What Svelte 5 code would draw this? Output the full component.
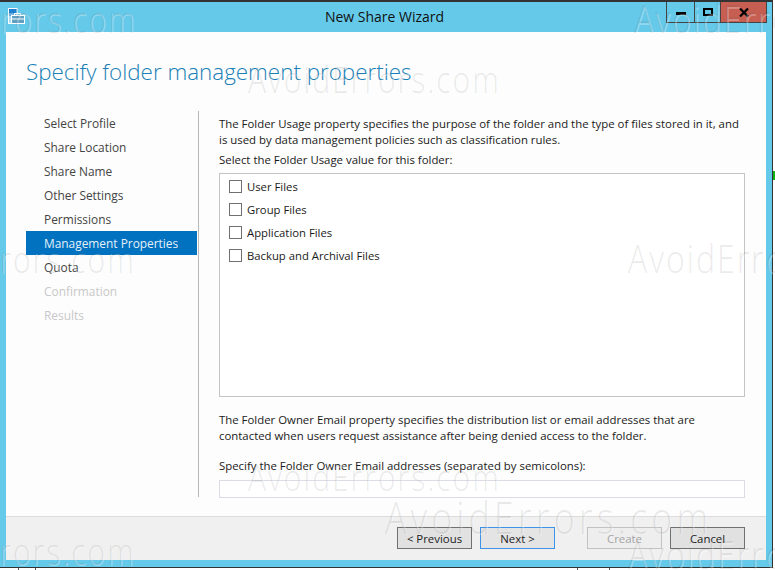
<script>
  const steps = [
    { label: 'Select Profile' },
    { label: 'Share Location' },
    { label: 'Share Name' },
    { label: 'Other Settings' },
    { label: 'Permissions' },
    { label: 'Management Properties', active: true },
    { label: 'Quota' },
    { label: 'Confirmation', off: true },
    { label: 'Results', off: true }
  ];
  const usages = ['User Files', 'Group Files', 'Application Files', 'Backup and Archival Files'];
  // faint site watermarks laid over the screenshot
  const marks = [
    { x: 248, y: 62, size: 30, gap: 2 },
    { x: 634, y: 0, size: 32, gap: 2 },
    { x: -116, y: 2, size: 30, gap: 2 },
    { x: 628, y: 240, size: 32, gap: 2 },
    { x: -117, y: 242, size: 30, gap: 2 },
    { x: 248, y: 460, size: 30, gap: 2 },
    { x: 385, y: 496, size: 36, gap: 4 },
    { x: -117, y: 534, size: 30, gap: 2 },
    { x: 628, y: 536, size: 32, gap: 2 }
  ];
</script>

<div class="screen">
  <div class="window">
    <header class="titlebar">
      <svg class="appicon" width="17" height="16" viewBox="0 0 17 16">
        <rect x="0.5" y="0.5" width="8.5" height="15" fill="#a9dcf0" stroke="#fff" />
        <rect x="1" y="1" width="7.5" height="4.5" fill="#1f7fd0" />
        <rect x="1" y="6.5" width="7.5" height="1.5" fill="#1f7fd0" />
        <path d="M6.5 7.5V5.5h6v2" fill="none" stroke="#fff" />
        <rect x="3.5" y="7.5" width="13" height="8" fill="#5f9fc2" stroke="#fff" />
        <path d="M3.5 11h13" stroke="#fff" />
      </svg>
      <div class="title">New Share Wizard</div>
      <div class="winbtns">
        <div class="winbtn min"><span></span></div>
        <div class="winbtn max"><span></span></div>
        <div class="winbtn close">
          <svg width="10" height="9" viewBox="0 0 10 9"><path d="M1 0.5l8 8M9 0.5l-8 8" stroke="#000" stroke-width="2.2" fill="none" /></svg>
        </div>
      </div>
    </header>

    <div class="client">
      <h1>Specify folder management properties</h1>

      <div class="body">
        <nav class="steps">
          {#each steps as step}
            <div class="step" class:active={step.active} class:off={step.off}>{step.label}</div>
          {/each}
        </nav>

        <section class="content">
          <p class="intro">The Folder Usage property specifies the purpose of the folder and the type of files stored in it, and<br />is used by data management policies such as classification rules.</p>
          <p class="sel">Select the Folder Usage value for this folder:</p>
          <div class="listbox">
            {#each usages as usage}
              <div class="check"><span class="box"></span>{usage}</div>
            {/each}
          </div>
          <p class="owner">The Folder Owner Email property specifies the distribution list or email addresses that are<br />contacted when users request assistance after being denied access to the folder.</p>
          <p class="spec">Specify the Folder Owner Email addresses (separated by semicolons):</p>
          <div class="input"></div>
        </section>
      </div>

      <footer>
        <button>&lt; Previous</button>
        <button class="primary">Next &gt;</button>
        <button class="disabled gap">Create</button>
        <button>Cancel</button>
      </footer>
    </div>
  </div>

  <div class="strip">
    <i style="left: 18px"></i>
    <i style="left: 35px"></i>
    <i style="left: 577px"></i>
    <i style="left: 609px"></i>
  </div>
  <div class="green"></div>

  {#each marks as m}
    <div class="mark" style="left: {m.x}px; top: {m.y}px; font-size: {m.size}px; letter-spacing: {m.gap}px">AvoidErrors.com</div>
  {/each}
</div>

<style>
  :global(body) {
    margin: 0;
    background: #fff;
  }

  .screen {
    position: relative;
    width: 775px;
    height: 570px;
    overflow: hidden;
    font-family: "Open Sans", "Noto Sans", sans-serif;
    font-size: 11.4px;
    color: #1a1a1a;
  }

  .window {
    box-sizing: border-box;
    width: 773px;
    height: 568px;
    background: #65c9ea;
    border-top: 2px solid #333;
    border-right: 1px solid #333;
    border-bottom: 1px solid #333;
    padding: 0 6px 7px 6px;
    display: flex;
    flex-direction: column;
  }

  .titlebar {
    position: relative;
    height: 30px;
    flex: none;
    display: flex;
    justify-content: center;
  }

  .appicon {
    position: absolute;
    left: 2px;
    top: 6px;
  }

  .title {
    font-size: 14px;
    color: #111;
    margin-top: 5px;
    margin-right: 3px;
  }

  .winbtns {
    position: absolute;
    right: -1px;
    top: 0;
    display: flex;
  }

  .winbtn {
    box-sizing: border-box;
    height: 21px;
    border: 1px solid #444;
    border-top: 0;
    display: flex;
    align-items: center;
    justify-content: center;
  }

  .min { width: 29px; }
  .min span { width: 10px; height: 3px; background: #000; margin-top: 2px; }
  .max { width: 26px; border-left: 0; }
  .max span { box-sizing: border-box; width: 10px; height: 8px; border: 2px solid #000; }
  .close { width: 46px; border-left: 0; background: #c75e52; }

  .client {
    flex: 1;
    min-height: 0;
    background: #fdfdfd;
    display: flex;
    flex-direction: column;
  }

  h1 {
    box-sizing: border-box;
    margin: 0;
    padding: 25px 0 0 20px;
    height: 54px;
    font-size: 22.4px;
    line-height: 30px;
    font-weight: 300;
    color: #1a80b6;
    flex: none;
  }

  .body {
    flex: 1;
    min-height: 0;
    display: flex;
    padding: 25px 0 0 20px;
  }

  .steps {
    box-sizing: border-box;
    width: 173px;
    height: 386px;
    border-right: 1px solid #b8b8b8;
    padding-right: 1px;
    margin-right: 20px;
    flex: none;
    font-size: 11.9px;
  }

  .step {
    height: 24px;
    line-height: 24px;
    padding-left: 18px;
    color: #444;
  }

  .step.active { background: #0072c0; color: #e6f0fa; }
  .step.off { color: #c8c8c8; }

  .content {
    width: 526px;
    flex: none;
  }

  p {
    margin: 0;
    line-height: 16px;
  }

  .intro { margin-top: 5px; }
  .sel { margin-top: 4px; }

  .listbox {
    box-sizing: border-box;
    height: 224px;
    margin-top: 5px;
    border: 1px solid #c4c4c4;
    background: #fff;
    padding: 1px 9px;
  }

  .check {
    height: 23px;
    display: flex;
    align-items: center;
    gap: 5px;
    font-size: 11.3px;
  }

  .box {
    box-sizing: border-box;
    width: 13px;
    height: 13px;
    border: 1px solid #707070;
    background: #fff;
  }

  .owner { margin-top: 15px; }
  .spec { margin-top: 14px; }

  .input {
    box-sizing: border-box;
    height: 18px;
    margin-top: 6px;
    border: 1px solid #dcdce6;
    background: #fff;
  }

  footer {
    box-sizing: border-box;
    height: 44px;
    flex: none;
    background: #f0f0f0;
    border-top: 1px solid #dcdcdc;
    display: flex;
    align-items: flex-start;
    gap: 8px;
    padding: 10px 0 0 391px;
  }

  button {
    box-sizing: border-box;
    width: 75px;
    height: 22px;
    padding: 1px 0 0;
    border: 1px solid #707070;
    background: #e1e1e1;
    color: #222;
    font: inherit;
  }

  button.primary { border-color: #3c93e8; background: #e4e4e4; }
  button.disabled { border-color: #c2c2c2; background: #eee; color: #a4a4a4; }
  button.gap { margin-left: 24px; }

  .strip {
    position: absolute;
    left: 0;
    right: 0;
    top: 568px;
    height: 2px;
  }

  .strip i {
    position: absolute;
    top: 0;
    width: 1px;
    height: 2px;
    background: #555;
  }

  .green {
    position: absolute;
    left: 773px;
    top: 171px;
    width: 2px;
    height: 9px;
    background: #10b010;
  }

  .mark {
    position: absolute;
    font-weight: 300;
    line-height: 1.2;
    white-space: nowrap;
    transform: scaleY(1.2);
    color: rgba(90, 90, 90, 0.12);
    text-shadow: 1px 1px 0 rgba(255, 255, 255, 0.3);
    pointer-events: none;
  }
</style>
